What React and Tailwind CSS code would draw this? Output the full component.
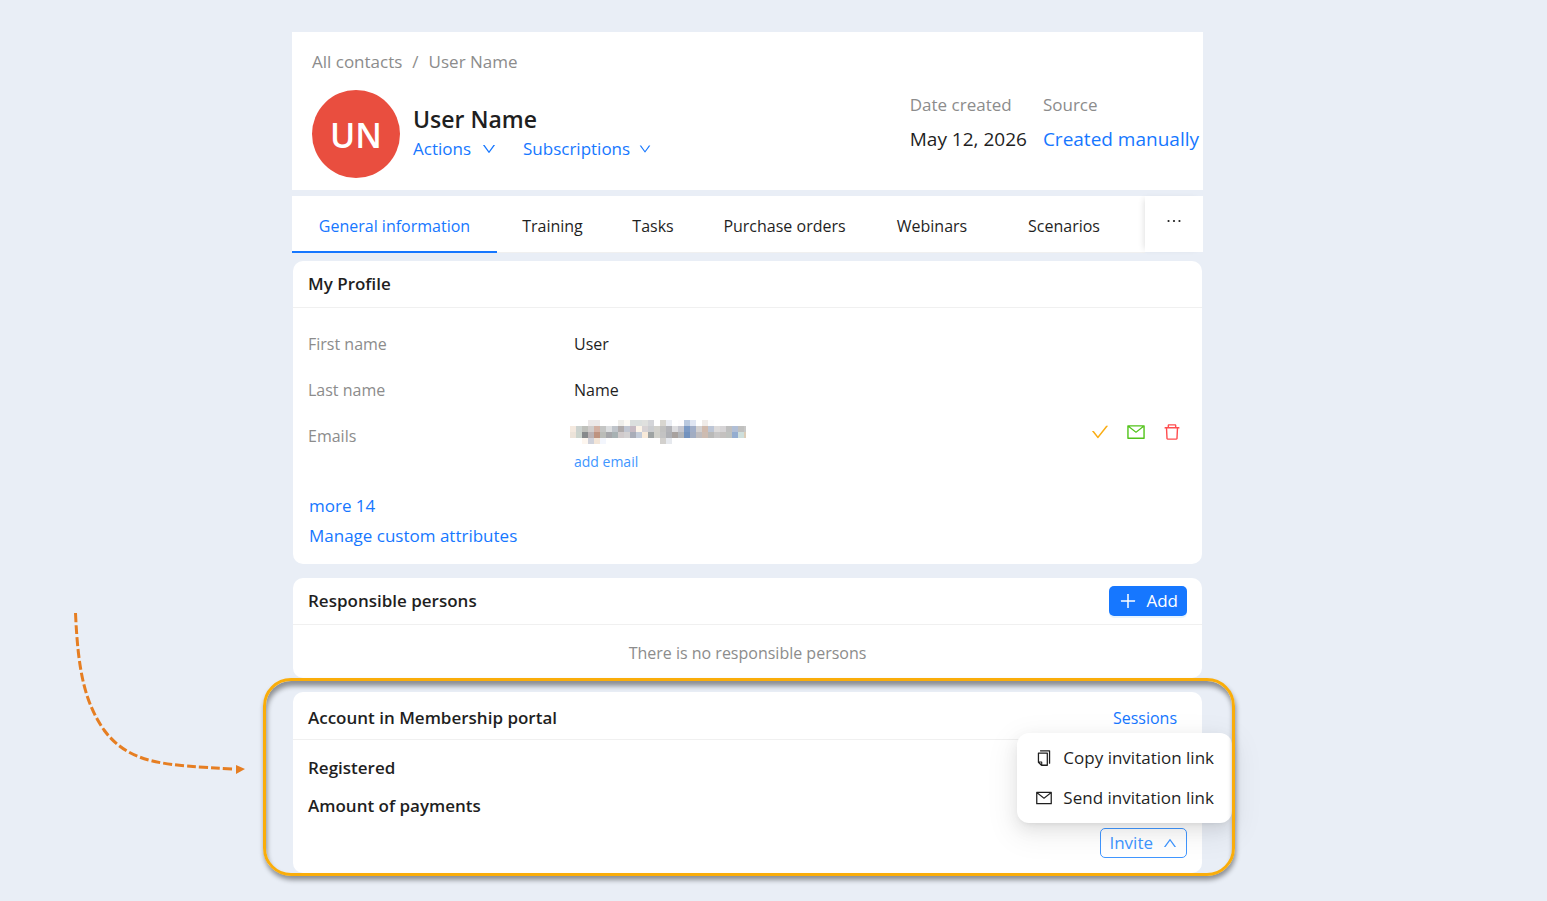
import {
  AiOutlineCheck,
  AiOutlineCopy,
  AiOutlineDelete,
  AiOutlineDown,
  AiOutlineEllipsis,
  AiOutlineMail,
  AiOutlinePlus,
  AiOutlineUp,
} from "react-icons/ai";

const tabs = [
  { label: "General information", width: "w-[205px]", active: true },
  { label: "Training", width: "w-[111px]" },
  { label: "Tasks", width: "w-[90px]" },
  { label: "Purchase orders", width: "w-[173px]" },
  { label: "Webinars", width: "w-[122px]" },
  { label: "Scenarios", width: "w-[142px]" },
];

// colour blocks of the hidden address, one array per row, "" = empty
const mosaic = [
  ["", "", "", "#ece8e8", "#ece8e8", "", "", "", "#efeeea", "#fdfaf5", "#dbdfde", "#dbdfde", "#dfe0de", "#d4d5d9", "", "#d8d6d0", "#ebeef4", "", "#fdfcfd", "#b9c8de", "#dfe5f2", "", "#efebe8", "#fcfcfc", "", "", "", "", "", ""],
  ["#f4e9df", "#ccd2cf", "#bfc0bb", "#d0cccb", "#d3b0a2", "#c4c5c4", "#dcdee0", "#bfc4ca", "#b0abab", "#c1c6d1", "#c6bac3", "#fdf4e8", "#d8d3d5", "#cbcdd0", "#d2d1cc", "#c1c1c0", "#b2b3b8", "#dcdcdf", "#c5c6ce", "#7b99c4", "#a1aec8", "#d3d0d0", "#d0baad", "#bcc5d5", "#dcdada", "#d6d4d6", "#bfbfbf", "#b1bfd6", "#c0c0bf", "#c8c8c7"],
  ["#ece3d9", "#ccd4cd", "#878a8c", "#bab2b4", "#be937f", "#babcb8", "#a5a6aa", "#a7b1b3", "#d0cacb", "#d3d1d2", "#a9adb8", "#c4ccd9", "#f8ead9", "#9ea3a3", "#d0d0ca", "#c3c3c3", "#aeb0b5", "#a8a29f", "#b2b5b9", "#7292be", "#a2adc2", "#c0bdbf", "#cdbcb2", "#b9b9b8", "#c7c6c6", "#c4c1bf", "#bfc2bf", "#94add0", "#cedfdc", "#dccdb8"],
  ["", "", "#fdf6ef", "#cfd1da", "#f3e5d7", "#f3f6fd", "", "", "", "", "", "", "", "", "", "#d2d0cd", "#e6e9ee", "", "", "", "", "", "", "", "", "", "", "", "", ""],
];

function HiddenEmail() {
  return (
    <svg className="-ml-1 block" width="176" height="24" viewBox="0 0 176 24" shapeRendering="crispEdges" role="img" aria-label="Hidden email">
      {mosaic.map((row, y) =>
        row.map((fill, x) => fill && <rect key={`${x}-${y}`} x={x * 6} y={y * 6} width="6" height="6" fill={fill} />)
      )}
    </svg>
  );
}

function Field({ label, children }) {
  return (
    <div className="flex">
      <dt className="w-[266px] shrink-0 text-[#8c8c8c]">{label}</dt>
      <dd className="grow">{children}</dd>
    </div>
  );
}

function Card({ title, action, className = "", children }) {
  return (
    <section className={`mx-px rounded-[10px] bg-white ${className}`}>
      <div className="flex min-h-[47px] items-center justify-between border-b border-[#f0f0f0] px-[15px]">
        <h2 className="font-semibold">{title}</h2>
        {action}
      </div>
      {children}
    </section>
  );
}

function Header() {
  return (
    <header className="flex justify-between bg-white pt-4 pr-1 pb-3 pl-5">
      <div>
        <nav aria-label="Breadcrumb" className="flex gap-[10px] leading-7 text-[#8c8c8c]">
          <a href="#contacts">All contacts</a>
          <span>/</span>
          <span>User Name</span>
        </nav>
        <div className="mt-[14px] flex gap-[13px]">
          <div className="flex size-[88px] items-center justify-center rounded-full bg-[#e94e3f] pt-px text-[34px] font-semibold text-white">
            UN
          </div>
          <div className="pt-3">
            <h1 className="text-[23px] leading-[35px] font-semibold">User Name</h1>
            <div className="flex gap-[26px] leading-6 text-[#1677ff]">
              <button className="flex items-center gap-[10px]">
                Actions <AiOutlineDown className="size-4" />
              </button>
              <button className="flex items-center gap-2">
                Subscriptions <AiOutlineDown className="size-[14px]" />
              </button>
            </div>
          </div>
        </div>
      </div>
      <dl className="flex gap-4 pt-[45px]">
        <div>
          <dt className="text-[#8c8c8c]">Date created</dt>
          <dd className="mt-[10px] text-[19px]">May 12, 2026</dd>
        </div>
        <div>
          <dt className="text-[#8c8c8c]">Source</dt>
          <dd className="mt-[10px] text-[19px] text-[#1677ff]">Created manually</dd>
        </div>
      </dl>
    </header>
  );
}

function Tabs() {
  return (
    <div className="mt-[6px] flex h-[57px]">
      <div role="tablist" className="flex grow border-b border-[#f0f0f0] bg-white text-base">
        {tabs.map((tab) => (
          <button
            key={tab.label}
            role="tab"
            aria-selected={!!tab.active}
            className={`pt-1 ${tab.width} ${tab.active ? "-mb-px border-b-2 border-[#1677ff] text-[#1677ff]" : ""}`}
          >
            {tab.label}
          </button>
        ))}
      </div>
      <button
        aria-label="More tabs"
        className="mb-px flex w-[58px] justify-center bg-white pt-[15px] shadow-[-4px_0_6px_-3px_rgba(0,0,0,0.12)]"
      >
        <AiOutlineEllipsis className="size-5" />
      </button>
    </div>
  );
}

function InviteMenu() {
  return (
    <div className="relative flex justify-end px-[15px]">
      <div
        role="menu"
        className="absolute right-[-30px] bottom-[35px] flex flex-col rounded-xl bg-white px-[18px] py-[5px] shadow-[0_9px_28px_8px_rgba(0,0,0,0.05),0_6px_16px_0_rgba(0,0,0,0.08),0_3px_6px_-4px_rgba(0,0,0,0.12)]"
      >
        <button role="menuitem" className="flex h-10 items-center gap-[10px] whitespace-nowrap">
          <AiOutlineCopy className="size-[18px]" /> Copy invitation link
        </button>
        <button role="menuitem" className="flex h-10 items-center gap-[10px] whitespace-nowrap">
          <AiOutlineMail className="size-[18px]" /> Send invitation link
        </button>
      </div>
      <button className="flex h-[30px] items-center gap-[9px] rounded-[5px] border border-[#4096ff] px-2 text-[#4096ff]">
        Invite <AiOutlineUp className="size-4" />
      </button>
    </div>
  );
}

export default function App() {
  return (
    <div className="min-h-screen bg-[#e9eef6] pt-8 pr-[52px] pb-7 font-['Open_Sans','Noto_Sans',sans-serif] text-[17px] leading-6 text-[#1f1f1f]">
      <main className="relative mx-auto w-[61%] max-w-[911px]">
        <Header />
        <Tabs />

        <Card title="My Profile" className="mt-2">
          <dl className="flex flex-col gap-[22px] px-[15px] pt-6 text-base leading-6">
            <Field label="First name">User</Field>
            <Field label="Last name">Name</Field>
            <Field label="Emails">
              <div className="-mt-1 flex items-center justify-between pr-[5px]">
                <HiddenEmail />
                <div className="flex gap-4">
                  <button aria-label="Confirm email">
                    <AiOutlineCheck className="size-5 text-[#faad14]" />
                  </button>
                  <button aria-label="Send email">
                    <AiOutlineMail className="size-5 text-[#52c41a]" />
                  </button>
                  <button aria-label="Delete email">
                    <AiOutlineDelete className="size-5 text-[#ff4d4f]" />
                  </button>
                </div>
              </div>
              <button className="mt-2 block text-sm text-[#4096ff]">add email</button>
            </Field>
          </dl>
          <div className="flex flex-col items-start gap-[6px] px-4 pt-[22px] pb-4 text-[#1677ff]">
            <button>more 14</button>
            <a href="#attributes">Manage custom attributes</a>
          </div>
        </Card>

        <Card
          title="Responsible persons"
          className="mt-[14px]"
          action={
            <button className="flex h-[30px] items-center gap-2 rounded-[5px] bg-[#1677ff] px-[9px] text-white shadow-[0_2px_0_rgba(5,145,255,0.1)]">
              <AiOutlinePlus className="size-5" /> Add
            </button>
          }
        >
          <p className="pt-4 pb-[13px] text-center text-base leading-6 text-[#8c8c8c]">There is no responsible persons</p>
        </Card>

        <div className="relative mt-[14px]">
          <Card
            title={<span className="block pt-[14px] pb-[9px]">Account in Membership portal</span>}
            action={<button className="px-[10px] pt-1 text-base text-[#1677ff]">Sessions</button>}
          >
            <div className="flex flex-col gap-[14px] px-[15px] pt-4 pb-[10px] font-semibold">
              <p>Registered</p>
              <p>Amount of payments</p>
            </div>
            <div className="pb-[15px]">
              <InviteMenu />
            </div>
          </Card>
          {/* highlight frame */}
          <div className="pointer-events-none absolute top-[-14px] right-[-32px] bottom-[-3px] left-[-29px] rounded-[28px] border-3 border-[#faad0a] shadow-[1px_4px_5px_rgba(0,0,0,0.4),inset_1px_5px_5px_rgba(0,0,0,0.4)]" />
        </div>

        <svg className="absolute top-[577px] left-[-222px]" width="180" height="174" viewBox="0 0 180 174" fill="none" aria-hidden="true">
          <path
            d="M5.500 4C8 60 14 92 34 121C60 156 96 156 163 160"
            stroke="#e67e22"
            strokeWidth="3"
            strokeDasharray="9 3"
          />
          <path d="M166 156L175 160L166 165Z" fill="#e67e22" />
        </svg>
      </main>
    </div>
  );
}
